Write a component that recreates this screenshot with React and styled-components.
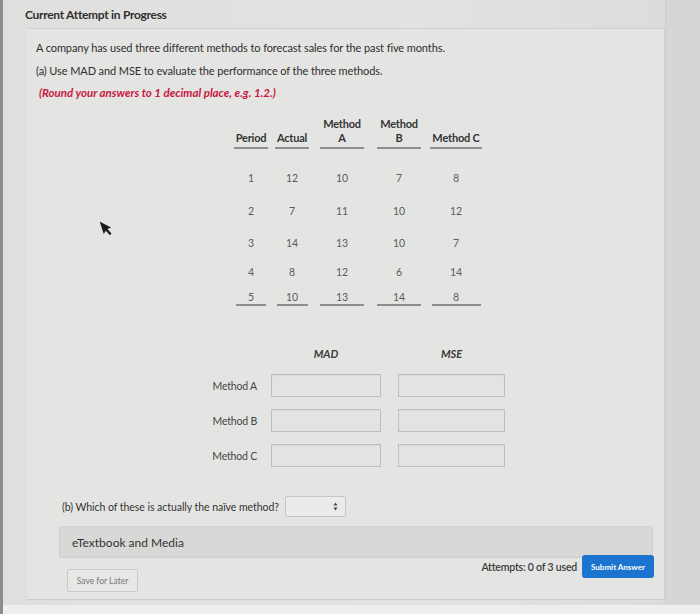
import styled, { createGlobalStyle } from "styled-components";

const GlobalStyle = createGlobalStyle`
  html, body {
    margin: 0;
    padding: 0;
    background: #dcdedb;
  }
  body {
    font-family: Lato, "Open Sans", sans-serif;
    color: #333;
  }
`;

const Screen = styled.div`
  width: 697px;
  height: 614px;
  border-left: 3px solid #8d8e8c;
  background: linear-gradient(90deg, #dfe0de 0%, #e2e3e1 60%, #dadcd9 100%);
  position: relative;
  overflow: hidden;
`;

const Title = styled.div`
  padding: 8px 0 0 22px;
  font-size: 12px;
  font-weight: 700;
  line-height: 14px;
  color: #2f2f2f;
  letter-spacing: -0.3px;
`;

const Panel = styled.div`
  margin: 6px 0 0 24px;
  width: 638px;
  height: 572px;
  background: #e4e5e3;
  border-top: 1px solid #d2d3d1;
  border-right: 1px solid #cfd0ce;
  border-bottom: 1px solid #cacbc9;
  padding: 11px 0 0 9px;
  box-sizing: border-box;
  position: relative;
`;

const Para = styled.p`
  margin: 0 0 ${(p) => p.$gap || 8}px;
  font-size: 11px;
  line-height: 15px;
  letter-spacing: -0.1px;
  color: #2e2e2e;
`;

const Hint = styled(Para)`
  color: #c8173f;
  font-size: 11.5px;
  font-style: italic;
  font-weight: 700;
  padding-left: 3px;
  letter-spacing: 0;
`;

const DataTable = styled.div`
  display: grid;
  grid-template-columns: 46px 36px 64px 50px 64px;
  margin: 15px 0 0 192px;
`;

const HeadCell = styled.div`
  display: flex;
  justify-content: center;
  align-items: flex-end;
  height: 34px;
  text-align: center;
`;

const HeadLabel = styled.span`
  display: inline-block;
  font-size: 11px;
  font-weight: 700;
  line-height: 14px;
  color: #353535;
  letter-spacing: -0.2px;
  padding: 0 2px 2px;
  min-width: ${(p) => p.$w || 0}px;
  border-bottom: 2px solid #8d8e8c;
`;

const Spacer = styled.div`
  grid-column: 1 / -1;
  height: 12px;
`;

const Cell = styled.div`
  display: flex;
  justify-content: center;
  align-items: center;
  height: ${(p) => p.$h}px;
  font-size: 10.5px;
  color: #5c5c5c;
`;

const LastValue = styled.span`
  display: inline-block;
  min-width: ${(p) => p.$w}px;
  text-align: center;
  padding-bottom: 1px;
  border-bottom: 2px solid #8d8e8c;
`;

const AnswerGrid = styled.div`
  display: grid;
  grid-template-columns: 56px 110px 110px;
  column-gap: 14px;
  row-gap: 12px;
  align-items: center;
  margin: 36px 0 0 165px;
`;

const ColHead = styled.div`
  font-size: 11px;
  font-weight: 700;
  font-style: italic;
  color: #3a3a3a;
  text-align: center;
  padding-left: ${(p) => (p.$second ? 3 : 0)}px;
  margin-bottom: 2px;
`;

const RowLabel = styled.div`
  font-size: 10.5px;
  color: #444;
  text-align: right;
  letter-spacing: -0.2px;
`;

const Box = styled.div`
  height: 21px;
  background: #e3e4e2;
  border: 1px solid #bdbfbc;
  margin-left: ${(p) => (p.$second ? 3 : 0)}px;
  box-shadow: inset 0 1px 1px rgba(0, 0, 0, 0.04);
`;

const Question = styled.div`
  display: flex;
  align-items: center;
  gap: 6px;
  margin: 29px 0 0 26px;
  font-size: 10.5px;
  color: #333;
  letter-spacing: -0.05px;
`;

const SelectBox = styled.div`
  width: 61px;
  height: 21px;
  background: #ebecea;
  border: 1px solid #c5c6c4;
  border-radius: 2px;
  display: flex;
  align-items: center;
  justify-content: flex-end;
  padding-right: 7px;
  box-sizing: border-box;
`;

const MediaBar = styled.div`
  margin: 9px 0 0 23px;
  width: 594px;
  height: 32px;
  background: #d8d9d7;
  border: 1px solid #cfd0ce;
  border-radius: 2px;
  box-sizing: border-box;
  display: flex;
  align-items: center;
  padding-left: 12px;
  font-size: 12px;
  color: #333;
`;

const Footer = styled.div`
  display: flex;
  align-items: flex-start;
  justify-content: space-between;
  margin: 0 0 0 31px;
  width: 587px;
`;

const SaveButton = styled.div`
  margin-top: 11px;
  width: 71px;
  height: 23px;
  border: 1px solid #c9cac8;
  border-radius: 2px;
  background: #e7e8e6;
  font-size: 8.5px;
  color: #777;
  display: flex;
  align-items: center;
  justify-content: center;
  box-sizing: border-box;
`;

const Actions = styled.div`
  display: flex;
  align-items: center;
  gap: 5px;
  margin-top: -3px;
`;

const Attempts = styled.span`
  font-size: 10.5px;
  font-weight: 600;
  color: #3a3a3a;
  letter-spacing: -0.2px;
`;

const SubmitButton = styled.div`
  width: 72px;
  height: 23px;
  border-radius: 3px;
  background: #1b74cf;
  color: #fff;
  font-size: 8px;
  font-weight: 700;
  display: flex;
  align-items: center;
  justify-content: center;
`;

const RightEdge = styled.div`
  position: absolute;
  top: 0;
  right: 0;
  width: 34px;
  height: 100%;
  background: #d5d7d4;
  border-left: 1px solid #cdcfcc;
`;

const BottomStrip = styled.div`
  position: absolute;
  left: 0;
  right: 0;
  bottom: 0;
  height: 9px;
  background: #eeefed;
`;

const Pointer = styled.svg`
  position: absolute;
  left: 97px;
  top: 219px;
`;

const rows = [
  { h: 33, v: ["1", "12", "10", "7", "8"] },
  { h: 33, v: ["2", "7", "11", "10", "12"] },
  { h: 31, v: ["3", "14", "13", "10", "7"] },
  { h: 27, v: ["4", "8", "12", "6", "14"] },
];
const lastRow = ["5", "10", "13", "14", "8"];
const lastWidths = [30, 31, 44, 44, 49];

export default function App() {
  return (
    <>
      <GlobalStyle />
      <Screen>
        <RightEdge />
        <Title>Current Attempt in Progress</Title>
        <Panel>
          <Para>
            A company has used three different methods to forecast sales for the past five months.
          </Para>
          <Para $gap={7}>(a) Use MAD and MSE to evaluate the performance of the three methods.</Para>
          <Hint>(Round your answers to 1 decimal place, e.g. 1.2.)</Hint>

          <DataTable>
            <HeadCell>
              <HeadLabel>Period</HeadLabel>
            </HeadCell>
            <HeadCell>
              <HeadLabel>Actual</HeadLabel>
            </HeadCell>
            <HeadCell>
              <HeadLabel $w={40}>
                Method
                <br />A
              </HeadLabel>
            </HeadCell>
            <HeadCell>
              <HeadLabel $w={40}>
                Method
                <br />B
              </HeadLabel>
            </HeadCell>
            <HeadCell>
              <HeadLabel>Method C</HeadLabel>
            </HeadCell>
            <Spacer />
            {rows.map((r) =>
              r.v.map((val, i) => (
                <Cell key={r.v[0] + "-" + i} $h={r.h}>
                  {val}
                </Cell>
              ))
            )}
            {lastRow.map((val, i) => (
              <Cell key={"last-" + i} $h={26}>
                <LastValue $w={lastWidths[i]}>{val}</LastValue>
              </Cell>
            ))}
          </DataTable>

          <AnswerGrid>
            <div />
            <ColHead>MAD</ColHead>
            <ColHead $second>MSE</ColHead>
            {["Method A", "Method B", "Method C"].map((m) => [
              <RowLabel key={m}>{m}</RowLabel>,
              <Box key={m + "mad"} />,
              <Box key={m + "mse"} $second />,
            ])}
          </AnswerGrid>

          <Question>
            (b) Which of these is actually the naïve method?
            <SelectBox>
              <svg width="5" height="9" viewBox="0 0 5 9">
                <path d="M2.5 0.5 L4.5 3.5 L0.5 3.5 Z M2.5 8.5 L4.5 5.5 L0.5 5.5 Z" fill="#444" />
              </svg>
            </SelectBox>
          </Question>

          <MediaBar>eTextbook and Media</MediaBar>

          <Footer>
            <SaveButton>Save for Later</SaveButton>
            <Actions>
              <Attempts>Attempts: 0 of 3 used</Attempts>
              <SubmitButton>Submit Answer</SubmitButton>
            </Actions>
          </Footer>
        </Panel>
        <BottomStrip />
        <Pointer width="14" height="18" viewBox="0 0 14 18">
          <path d="M2 1 L11 10 L7 10.5 L9.5 16 L7.5 17 L5 11.5 L2 14 Z" fill="#1c1c1c" transform="rotate(-18 6 9)" />
        </Pointer>
      </Screen>
    </>
  );
}
